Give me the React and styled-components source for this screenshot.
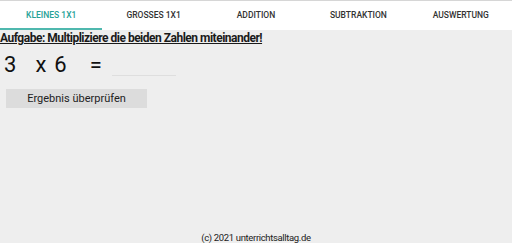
import React from "react";
import styled, { createGlobalStyle } from "styled-components";

const Global = createGlobalStyle`
  html, body { margin: 0; padding: 0; height: 100%; }
  body { background: #eeeeee; font-family: Roboto, "Noto Sans", sans-serif; color: #212121; }
  #root { height: 100%; }
`;

const Page = styled.div`
  display: flex;
  flex-direction: column;
  height: 100vh;
  border-top: 1px solid #d6d6d6;
  box-sizing: border-box;
`;

const Tabs = styled.nav`
  display: grid;
  grid-template-columns: repeat(5, 1fr);
  background: #ffffff;
  height: 29px;
`;

const Tab = styled.div`
  display: flex;
  align-items: center;
  justify-content: center;
  font-size: 8.5px;
  font-weight: 500;
  color: ${(p) => (p.$active ? "#26a197" : "#333333")};
  border-bottom: 2px solid ${(p) => (p.$active ? "#4fb8ae" : "transparent")};
`;

const Main = styled.main`
  flex: 1;
  display: flex;
  flex-direction: column;
`;

const Heading = styled.h1`
  margin: 0;
  padding-top: 1px;
  font-size: 12px;
  letter-spacing: -0.5px;
  font-weight: 700;
  text-decoration: underline;
  color: #1a1a1a;
  line-height: 14px;
`;

const Equation = styled.div`
  display: flex;
  align-items: flex-end;
  margin-top: 8px;
  padding-left: 4px;
  font-size: 22px;
  line-height: 24px;
  color: #111;
`;

const Term = styled.span`
  margin-right: ${(p) => p.$gap}px;
`;

const Answer = styled.input`
  width: 64px;
  height: 18px;
  margin-left: 10px;
  border: none;
  border-bottom: 1px solid #dedede;
  background: transparent;
  outline: none;
  font-family: inherit;
  font-size: 16px;
  margin-bottom: 1px;
  padding: 0;
`;

const CheckButton = styled.button`
  align-self: flex-start;
  margin: 12px 0 0 6px;
  width: 141px;
  height: 19px;
  border: none;
  background: #dcdcdc;
  font-family: Roboto, sans-serif;
  font-size: 11px;
  color: #222;
  padding: 0;
`;

const Footer = styled.footer`
  text-align: center;
  font-size: 9.5px;
  letter-spacing: -0.35px;
  color: #222;
  line-height: 10px;
`;

const tabs = ["Kleines 1x1", "Grosses 1x1", "Addition", "Subtraktion", "Auswertung"];

export default function App() {
  return (
    <>
      <Global />
      <Page>
        <Tabs>
          {tabs.map((t, i) => (
            <Tab key={t} $active={i === 0}>{t.toUpperCase()}</Tab>
          ))}
        </Tabs>
        <Main>
          <Heading>Aufgabe: Multipliziere die beiden Zahlen miteinander!</Heading>
          <Equation>
            <Term $gap={19}>3</Term>
            <Term $gap={8}>x</Term>
            <Term $gap={23}>6</Term>
            <Term $gap={0}>=</Term>
            <Answer aria-label="Ergebnis" />
          </Equation>
          <CheckButton>Ergebnis überprüfen</CheckButton>
        </Main>
        <Footer>(c) 2021 unterrichtsalltag.de</Footer>
      </Page>
    </>
  );
}
